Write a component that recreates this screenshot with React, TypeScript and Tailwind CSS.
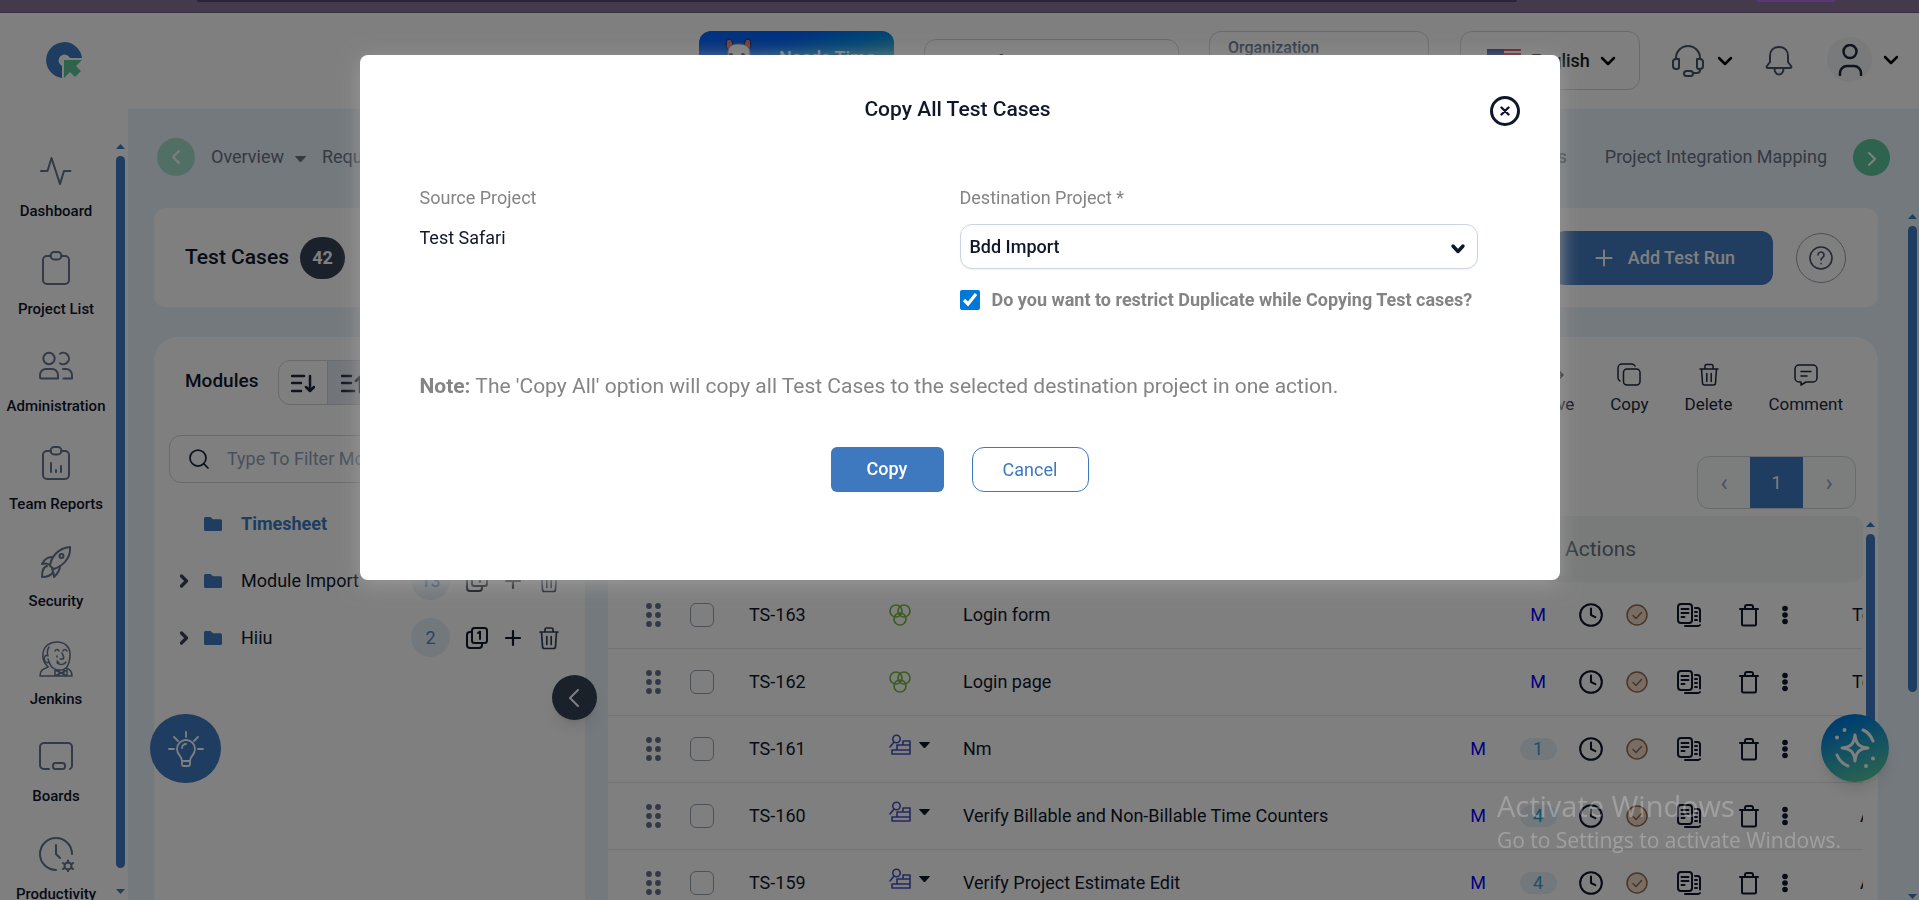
import type { ReactNode } from "react";
import { ChevronDown, ChevronLeft, ChevronRight, Clock, Plus, Search } from "lucide-react";

type IconProps = { className?: string };

function Stroke({ size, width = 2, className, children }: { size: number; width?: number; className?: string; children: ReactNode }) {
  return (
    <svg
      width={size}
      height={size}
      viewBox={`0 0 ${size} ${size}`}
      fill="none"
      stroke="currentColor"
      strokeWidth={width}
      strokeLinecap="round"
      strokeLinejoin="round"
      className={className}
      aria-hidden="true"
    >
      {children}
    </svg>
  );
}

const navItems: { label: string; icon: ReactNode }[] = [
  { label: "Dashboard", icon: <path d="M3 18h6.5L13.500 5l8.500 26 4-13h6.500" /> },
  {
    label: "Project List",
    icon: (
      <>
        <path d="M13 5H9a4 4 0 0 0-4 4v20a4 4 0 0 0 4 4h18a4 4 0 0 0 4-4V9a4 4 0 0 0-4-4h-4" />
        <rect x="12.500" y="1" width="11" height="7.500" rx="3.700" />
      </>
    ),
  },
  {
    label: "Administration",
    icon: (
      <>
        <circle cx="11" cy="10.500" r="5.700" />
        <path d="M22 5.800a5.700 5.700 0 1 1 0 9.400" />
        <path d="M2 29v-2a6 6 0 0 1 6-6h6a6 6 0 0 1 6 6v3.500H3.500A1.500 1.500 0 0 1 2 29zM25 21h3a6 6 0 0 1 6 6v3.500h-8.500" />
      </>
    ),
  },
  {
    label: "Team Reports",
    icon: (
      <>
        <path d="M13 5H9a4 4 0 0 0-4 4v20a4 4 0 0 0 4 4h18a4 4 0 0 0 4-4V9a4 4 0 0 0-4-4h-4" />
        <rect x="12.500" y="1" width="11" height="7.500" rx="3.700" />
        <path d="M13 17v9M18 24v2M23 20v6" />
      </>
    ),
  },
  {
    label: "Security",
    icon: (
      <>
        <path d="M12 23c1-9 8-18 20-19 1 11-7 19-16 22z" />
        <circle cx="23.500" cy="13" r="2" />
        <path d="M14 14c-5 0-8 3-10 7 3-1 5-1 8 1M22 23c0 5-3 8-6 11 0-3 0-5-2-8M9 23c-4 1-5 6-5 11 4 0 9-1 11-5" />
      </>
    ),
  },
  {
    label: "Jenkins",
    icon: (
      <>
        <path d="M10 26C6 22 4 18 5 12 6 5 12 1 19 1c8 0 13 5 13 12 0 6-1 11-4 14-3 3-9 3-13 0-3-2-4-6-5-9" strokeWidth="1.500" />
        <path d="M11 6c-2 3-2 6-1 9-3-2-5 2-3 5 1 2 3 2 4 1M17 10c1-2 3-2 4 0M25 10c1-2 3-2 4 0M19 15v1M24 12c1 3 3 5 1 6h-3M19 22c3 2 7 2 9-1M19 20l2 2" strokeWidth="1.500" />
        <path d="M10 26c-5 2-8 3-8 9h32c0-5-2-7-6-8M17 29v6M17 29l6 3 6-3v6l-6-3-6 3M21 29v5M26 29v5" strokeWidth="1.500" />
      </>
    ),
  },
  {
    label: "Boards",
    icon: (
      <>
        <path d="M11 31H6a4 4 0 0 1-4-4V9a4 4 0 0 1 4-4h24a4 4 0 0 1 4 4v18a4 4 0 0 1-2 4" />
        <rect x="15" y="25" width="12" height="6" rx="2.500" />
      </>
    ),
  },
  {
    label: "Productivity",
    icon: (
      <>
        <path d="M18 34A16 16 0 1 1 34 18M18 9v9l4 4" />
        <circle cx="30" cy="30" r="3.500" />
        <path d="M30 24.500v2M30 33.500v2M25 27l2 1.300M33 31.700l2 1.300M25 33l2-1.300M33 28.300l2-1.300" />
      </>
    ),
  },
];

const modules = [
  { name: "Module Import", count: 13 },
  { name: "Hiiu", count: 2 },
];

type TestCase = { id: string; title: string; bdd?: boolean; runs?: number; owner: string };

const testCases: TestCase[] = [
  { id: "TS-163", title: "Login form", bdd: true, owner: "To" },
  { id: "TS-162", title: "Login page", bdd: true, owner: "To" },
  { id: "TS-161", title: "Nm", runs: 1, owner: "" },
  { id: "TS-160", title: "Verify Billable and Non-Billable Time Counters", runs: 4, owner: "A" },
  { id: "TS-159", title: "Verify Project Estimate Edit", runs: 4, owner: "A" },
];

function Logo() {
  return (
    <svg width="36" height="36" viewBox="0 0 36 36" aria-label="Logo">
      <path fill="#3d7ac0" d="M16 36A18 18 0 1 1 36 16H24a6 6 0 1 0-8 8z" />
      <path fill="#5cc79b" d="M18 18h18l-6 6 5 5-6 6-5-5-6 6z" />
    </svg>
  );
}

function Arrow({ down = false }: { down?: boolean }) {
  return (
    <svg width="9" height="5" viewBox="0 0 9 5" fill="#3d7ac0" className="shrink-0" aria-hidden="true">
      <path d={down ? "M0 0h9L4.500 5z" : "M0 5h9L4.500 0z"} />
    </svg>
  );
}

function Trash({ className }: IconProps) {
  return (
    <Stroke size={24} width={1.7} className={className}>
      <path d="M3 6h18M8 6V3.500A1.500 1.500 0 0 1 9.500 2h5A1.500 1.500 0 0 1 16 3.500V6M4.500 6l1 14.500A2 2 0 0 0 7.500 22.500h9a2 2 0 0 0 2-2l1-14.500M9.800 10.500v8M14.200 10.500v8" />
    </Stroke>
  );
}

function TrashOutline() {
  return (
    <Stroke size={24} width={2}>
      <path d="M3 6h18M8 6V4a2 2 0 0 1 2-2h4a2 2 0 0 1 2 2v2M5 6v15a1.500 1.500 0 0 0 1.500 1.500h11A1.500 1.500 0 0 0 19 21V6" />
    </Stroke>
  );
}

function CopyCount() {
  return (
    <Stroke size={22} width={2}>
      <rect x="6" y="1" width="15" height="15" rx="2.500" />
      <path d="M6 5H4a3 3 0 0 0-3 3v10a3 3 0 0 0 3 3h9a3 3 0 0 0 3-3v-2M12 6l2-1.500V12" />
    </Stroke>
  );
}

function Docs() {
  return (
    <Stroke size={26} width={2}>
      <rect x="2" y="2" width="14" height="19" rx="3" />
      <path d="M5.500 7h7M5.500 11h7M5.500 15h3M19 6h2.500A2.500 2.500 0 0 1 24 8.500v11M9 24h12.500a2.500 2.500 0 0 0 2.500-1M19 10h2M19 14h2M19 18h2" />
    </Stroke>
  );
}

function Folder() {
  return (
    <svg width="18" height="14" viewBox="0 0 18 14" fill="#3d7ac0" className="ml-[10px] shrink-0" aria-hidden="true">
      <path d="M1.500 0h5L9 2.200h7.500A1.500 1.500 0 0 1 18 3.700v8.800a1.500 1.500 0 0 1-1.500 1.500h-15A1.500 1.500 0 0 1 0 12.500v-11A1.500 1.500 0 0 1 1.500 0z" />
    </svg>
  );
}

function Caret({ className }: IconProps) {
  return (
    <svg width="11" height="7" viewBox="0 0 11 7" fill="currentColor" stroke="currentColor" strokeLinejoin="round" className={className} aria-hidden="true">
      <path d="M.500.500h10L5.500 6z" />
    </svg>
  );
}

function Header() {
  return (
    <header className="flex h-24 shrink-0 items-start bg-white pr-4">
      <div className="flex h-24 w-32 shrink-0 items-center justify-center pb-[2px]">
        <Logo />
      </div>
      <div className="ml-auto flex items-start pt-[18px]">
        <button className="flex h-[59px] w-[195px] items-center rounded-xl bg-linear-to-br from-[#0064ff] from-30% to-[#62d09c] pb-[6px] pl-6 text-lg font-medium text-white">
          <svg width="34" height="46" viewBox="0 0 34 46" className="mt-[6px]" aria-hidden="true">
            <path fill="#d98383" stroke="#2b2050" d="M5 12C2 8 3 1 6 1s4 5 4 9zM21 10c0-4 1-9 4-9s4 7 1 11z" />
            <path fill="#fff" stroke="#8892a8" d="M5 46V15C5 8 9 6 15.500 6S27 8 27 15v31z" />
            <circle cx="8" cy="17" r="2" fill="#334" />
            <circle cx="20" cy="17" r="2" fill="#334" />
          </svg>
          <span className="ml-[22px]">Needs Time</span>
        </button>
        <select aria-label="Project" className="mt-2 ml-[30px] h-[45px] w-[255px] appearance-none rounded-xl border border-gray-300 bg-white px-3 text-lg text-slate-900">
          <option>Test Safari</option>
        </select>
        <div className="ml-[30px] h-[59px] w-[220px] rounded-xl border border-gray-300 px-[18px] pt-1 text-base font-medium text-slate-500">
          Organization
        </div>
        <div className="relative ml-[31px]">
          <select aria-label="Language" className="h-[59px] w-[180px] appearance-none rounded-xl border border-gray-300 bg-white pl-[70px] text-lg font-medium text-gray-900">
            <option>English</option>
          </select>
          <svg width="34" height="23" viewBox="0 0 34 23" className="absolute top-[18px] left-[27px]" aria-hidden="true">
            <path fill="#fff" d="M0 0h34v23H0z" />
            <path stroke="#d8344c" strokeWidth="2" d="M0 1h34M0 5h34M0 9h34M0 13h34M0 17h34M0 21h34" />
            <path fill="#3b4f9c" d="M0 0h17v12H0z" />
          </svg>
          <ChevronDown className="absolute top-[18px] right-5 size-6" strokeWidth={2.5} />
        </div>
        <button aria-label="Support" className="mt-[14px] ml-8 flex items-center gap-[9px] text-slate-600">
          <Stroke size={32}>
            <path d="M4 14v-1a12 12 0 0 1 24 0v1M7 14H4a3 3 0 0 0-3 3v4a3 3 0 0 0 3 3h1a2 2 0 0 0 2-2zM25 14h3a3 3 0 0 1 3 3v4a3 3 0 0 1-3 3h-1a2 2 0 0 1-2-2zM28 24v1a3 3 0 0 1-3 3h-4" />
            <rect x="12" y="26" width="9" height="5" rx="2.500" />
          </Stroke>
          <ChevronDown className="size-6 text-black" strokeWidth={2.5} />
        </button>
        <button aria-label="Notifications" className="mt-[14px] ml-[26px] text-slate-600">
          <Stroke size={32}>
            <path d="M16 2c-6 0-9 4-9 9v6l-3 4c-1 1 0 2 1 2h22c1 0 2-1 1-2l-3-4v-6c0-5-3-9-9-9zM11.500 24c0 3 2 5.500 4.500 5.500s4.500-2.500 4.500-5.500" />
          </Stroke>
        </button>
        <button aria-label="Account" className="mt-[6px] ml-8 flex items-center gap-[7px]">
          <span className="flex size-[45px] items-center justify-center rounded-full bg-gray-100 text-slate-800">
            <Stroke size={32} width={2.5}>
              <circle cx="16" cy="7.500" r="6.500" />
              <path d="M6 31v-2a7 7 0 0 1 7-7h7a7 7 0 0 1 7 7v2" />
            </Stroke>
          </span>
          <ChevronDown className="size-6" strokeWidth={2.5} />
        </button>
      </div>
    </header>
  );
}

function Sidebar() {
  return (
    <aside className="flex w-32 shrink-0 bg-white">
      <nav className="w-28 pt-11">
        <ul className="grid h-[780px] auto-rows-fr">
          {navItems.map((item) => (
            <li key={item.label}>
              <a href="#" className="flex flex-col items-center gap-[11px] text-slate-500">
                <Stroke size={36}>{item.icon}</Stroke>
                <span className="text-[15px] leading-[22px] font-medium whitespace-nowrap text-slate-900">{item.label}</span>
              </a>
            </li>
          ))}
        </ul>
      </nav>
      <div className="ml-1 flex flex-col items-center pt-[35px] pb-[6px]">
        <Arrow />
        <div className="mt-[7px] mb-[21px] w-[9px] flex-1 rounded-full bg-[#3d7ac0]" />
        <Arrow down />
      </div>
    </aside>
  );
}

function ModulePanel() {
  return (
    <section className="w-[431px] shrink-0 rounded-t-3xl bg-white pt-[23px]">
      <div className="flex items-center pl-[31px]">
        <h2 className="pb-1 text-[19px] leading-6 font-medium text-slate-900">Modules</h2>
        <div className="ml-5 flex h-[45px] overflow-hidden rounded-xl border border-gray-300 text-slate-800">
          <button aria-label="Expand all" className="flex w-[49px] items-center justify-center border-r border-gray-300 pt-[2px]">
            <Stroke size={24} width={2.5}>
              <path d="M1 4h12M1 11h9M1 19h9M19 4v15M15 15l4 4 4-4" />
            </Stroke>
          </button>
          <button aria-label="Collapse all" className="flex w-[49px] items-center justify-center bg-slate-200 pt-[2px]">
            <Stroke size={24} width={2.5}>
              <path d="M1 4h9M1 11h9M1 19h12M19 20V5M15 9l4-4 4 4" />
            </Stroke>
          </button>
        </div>
      </div>
      <div className="mx-[15px] mt-[30px] flex h-12 items-center rounded-xl border border-gray-300 pl-[17px]">
        <Search className="size-6 text-slate-800" strokeWidth={1.75} />
        <input aria-label="Filter modules" placeholder="Type To Filter Modules" className="ml-4 w-72 text-lg outline-none placeholder:text-slate-400" />
      </div>
      <ul className="mt-3 text-lg text-slate-900">
        <li className="flex h-[57px] items-center pl-10 font-bold text-[#3d7ac0]">
          <Folder />
          <span className="ml-[19px]">Timesheet</span>
        </li>
        {modules.map((m) => (
          <li key={m.name} className="flex h-[57px] items-center pr-6 pl-5">
            <ChevronRight className="size-5 text-gray-700" strokeWidth={4} />
            <Folder />
            <span className="ml-[19px]">{m.name}</span>
            <span className="ml-auto flex size-[39px] items-center justify-center rounded-full bg-[#e6f0f8] text-[#4e86cf]">{m.count}</span>
            <button aria-label="Copy module" className="ml-4">
              <CopyCount />
            </button>
            <button aria-label="Add module" className="ml-[13px]">
              <Plus className="size-6" strokeWidth={2.2} />
            </button>
            <button aria-label="Delete module" className="ml-3 text-slate-700">
              <Trash />
            </button>
          </li>
        ))}
      </ul>
    </section>
  );
}

function ToolButton({ label, children }: { label: string; children: ReactNode }) {
  return (
    <button className="flex flex-col items-center gap-[5px] text-[17px] leading-6 text-slate-800">
      <Stroke size={24} width={1.5}>{children}</Stroke>
      {label}
    </button>
  );
}

function CaseRow({ item }: { item: TestCase }) {
  return (
    <tr className="h-[67px] [&>td]:border-b [&>td]:border-gray-200">
      <td className="pl-[38px]">
        <svg width="15" height="24" viewBox="0 0 15 24" fill="#64708a" aria-hidden="true">
          {[3, 12, 21].map((y) => (
            <g key={y}>
              <circle cx="3" cy={y} r="2.900" />
              <circle cx="12" cy={y} r="2.900" />
            </g>
          ))}
        </svg>
      </td>
      <td>
        <input type="checkbox" aria-label={item.id} className="block size-6 appearance-none rounded-md border border-gray-400" />
      </td>
      <td>{item.id}</td>
      <td>
        {item.bdd ? (
          <Stroke size={22} width={1.7} className="text-[#78b83c]">
            <circle cx="7" cy="7" r="6" />
            <circle cx="15" cy="7" r="6" />
            <circle cx="11" cy="15" r="6" />
          </Stroke>
        ) : (
          <button aria-label="Test type" className="flex items-center gap-2 pb-2">
            <Stroke size={22} width={1.6} className="text-[#4650c0]">
              <circle cx="7.500" cy="5" r="3.700" />
              <path d="M5 8l-4 5M8 11h13v5H8zM14 11V7h7v4M3 16h18v4H3z" />
            </Stroke>
            <Caret />
          </button>
        )}
      </td>
      <td>{item.title}</td>
      <td>
        <div className="flex items-center">
          <span className="w-15 text-center text-[#0a00ff]">{item.runs ? "M" : ""}</span>
          <span className="flex w-15 justify-center text-[#0a00ff]">
            {item.runs ? <span className="w-[37px] rounded-full bg-[#e4f0f8] text-center leading-[22px] text-[#3a9fd0]">{item.runs}</span> : "M"}
          </span>
          <button aria-label="History" className="flex w-[46px] justify-center">
            <Clock className="size-[26px]" strokeWidth={1.9} />
          </button>
          <button aria-label="Approve" className="flex w-[45px] justify-center text-[#98694c]">
            <Stroke size={22} width={1.5}>
              <circle cx="11" cy="11" r="10" fill="#efdacb" />
              <path d="M7 11.500l3 3 5.500-6" />
            </Stroke>
          </button>
          <button aria-label="Duplicate" className="flex w-15 justify-center">
            <Docs />
          </button>
          <button aria-label="Delete" className="flex w-15 justify-center">
            <TrashOutline />
          </button>
          <button aria-label="More">
            <svg width="12" height="20" viewBox="0 0 12 20" fill="currentColor" aria-hidden="true">
              <circle cx="6" cy="3.500" r="2.800" />
              <circle cx="6" cy="10" r="2.800" />
              <circle cx="6" cy="16.500" r="2.800" />
            </svg>
          </button>
        </div>
      </td>
      <td className={item.owner === "A" ? "overflow-hidden pl-2" : "overflow-hidden"}>{item.owner}</td>
    </tr>
  );
}

function CasesPanel() {
  return (
    <section className="min-w-0 flex-1 rounded-t-3xl bg-white">
      <div className="flex justify-end gap-9 pt-[26px] pr-[35px]">
        <ToolButton label="Move">
          <path d="M2 12h19M16 7l5 5-5 5" />
        </ToolButton>
        <ToolButton label="Copy">
          <rect x="6.500" y="6" width="16.500" height="16" rx="3.500" />
          <path d="M3 18a4 4 0 0 1-2-3V5a4 4 0 0 1 4-4h10a4 4 0 0 1 3 2" />
        </ToolButton>
        <ToolButton label="Delete">
          <path d="M3 6h18M8 6V3a1.500 1.500 0 0 1 1.500-1.500h5A1.500 1.500 0 0 1 16 3v3M4.500 6l1 14a2 2 0 0 0 2 2h9a2 2 0 0 0 2-2l1-14M9.800 10.500v8M14.200 10.500v8" />
        </ToolButton>
        <ToolButton label="Comment">
          <path d="M5 2h14a4 4 0 0 1 4 4v9a4 4 0 0 1-4 4h-7l-5 3v-3H5a4 4 0 0 1-4-4V6a4 4 0 0 1 4-4zM7 8.500h10M7 13h6" />
        </ToolButton>
      </div>
      <div className="mt-10 flex justify-end pr-[22px]">
        <div className="flex h-[53px] overflow-hidden rounded-xl border border-gray-300 bg-gray-50 text-lg text-slate-400">
          <button aria-label="Previous page" className="w-[52px] text-2xl">‹</button>
          <button className="w-[53px] bg-[#3d7ac0] text-white">1</button>
          <button aria-label="Next page" className="w-[52px] text-2xl">›</button>
        </div>
      </div>
      <div className="mt-[7px] flex">
        <table className="w-full min-w-0 table-fixed border-separate border-spacing-0 text-left text-lg text-slate-900">
          <colgroup>
            <col className="w-[82px]" />
            <col className="w-[59px]" />
            <col className="w-[140px]" />
            <col className="w-[74px]" />
            <col />
            <col className="w-[404px]" />
            <col className="w-[11px]" />
          </colgroup>
          <thead>
            <tr className="h-[66px] text-[21px] text-gray-500">
              <th colSpan={5} className="rounded-l-3xl bg-[#f1f7f4]" />
              <th className="bg-[#f1f7f4] pl-[117px] font-normal">Actions</th>
              <th className="rounded-r-xl bg-[#f1f7f4]" />
            </tr>
          </thead>
          <tbody>
            {testCases.map((item) => (
              <CaseRow key={item.id} item={item} />
            ))}
          </tbody>
        </table>
        <div className="mx-[3px] flex shrink-0 flex-col pt-[6px]">
          <Arrow />
          <div className="mt-[7px] h-[218px] w-[9px] rounded-full bg-[#3d7ac0]" />
        </div>
      </div>
    </section>
  );
}

function CopyDialog() {
  return (
    <div className="fixed inset-0 flex items-start justify-center bg-black/50 pt-[55px]">
      <div role="dialog" aria-labelledby="copy-title" className="relative w-[1200px] rounded-lg bg-white pt-[39px] pb-[88px] shadow-[0_4px_20px_#999]">
        <h1 id="copy-title" className="pr-1 text-center text-[21px] leading-[30px] font-medium text-slate-900">
          Copy All Test Cases
        </h1>
        <button aria-label="Close" className="absolute top-[41px] right-10 flex size-[30px] items-center justify-center rounded-full border-[3px] border-slate-900 text-slate-900">
          <Stroke size={10} width={2.4}>
            <path d="M1.500 1.500l7 7M8.500 1.500l-7 7" />
          </Stroke>
        </button>
        <div className="mt-[62px] grid grid-cols-2 px-[60px] text-lg leading-6 text-[#848484]">
          <div>
            <p>Source Project</p>
            <p className="mt-4 text-slate-900">Test Safari</p>
          </div>
          <div className="pr-[22px]">
            <label htmlFor="destination">Destination Project *</label>
            <div className="relative mt-[14px]">
              <select id="destination" className="block h-[45px] w-full appearance-none rounded-xl border border-slate-300 bg-white px-[9px] font-medium text-slate-900 shadow-xs">
                <option>Bdd Import</option>
              </select>
              <Stroke size={16} width={3.4} className="pointer-events-none absolute top-4 right-3 text-slate-900">
                <path d="M3 6l5 5.500L13 6" />
              </Stroke>
            </div>
            <label className="mt-[19px] flex items-center gap-3 font-bold whitespace-nowrap">
              <input type="checkbox" defaultChecked className="size-5 accent-[#0078d7]" />
              Do you want to restrict Duplicate while Copying Test cases?
            </label>
          </div>
        </div>
        <p className="mt-[59px] px-[60px] text-[21px] leading-[30px] text-[#848484]">
          <b>Note:</b> The 'Copy All' option will copy all Test Cases to the selected destination project in one action.
        </p>
        <div className="mt-[46px] flex justify-center gap-7 text-lg">
          <button className="h-[45px] w-[113px] rounded-md bg-[#3e79c0] pb-px font-medium text-white">Copy</button>
          <button className="h-[45px] w-[117px] rounded-xl border border-[#3e79c0] text-[#3e79c0]">Cancel</button>
        </div>
      </div>
    </div>
  );
}

export default function App() {
  return (
    <div className="relative flex h-screen flex-col overflow-hidden bg-white font-[Roboto,sans-serif] text-base">
      <div className="flex h-[13px] shrink-0 items-start border-b border-[#745f7e] bg-[#887496]">
        <div className="ml-[197px] h-[2px] w-[1320px] rounded-b-full bg-[#564670]" />
        <div className="ml-[239px] h-[2px] w-20 rounded-b-full bg-[#b070f0]" />
      </div>
      <Header />
      <div className="flex min-h-0 flex-1">
        <Sidebar />
        <main className="flex min-w-0 flex-1 flex-col bg-[#e8f2fa]">
          <nav className="flex h-[99px] shrink-0 items-center px-[29px] pb-[3px] text-lg text-gray-500">
            <button aria-label="Scroll tabs left" className="mr-4 flex size-[38px] items-center justify-center rounded-full bg-[#a5dfcb] text-white">
              <ChevronLeft className="size-6" />
            </button>
            <a href="#">Overview</a>
            <Caret className="mt-1 ml-[11px]" />
            <a href="#" className="ml-4">Requirements</a>
            <a href="#" className="ml-auto">Custom Fields</a>
            <a href="#" className="ml-[38px]">Project Integration Mapping</a>
            <button aria-label="Scroll tabs right" className="ml-[26px] flex size-[37px] items-center justify-center rounded-full bg-[#5cc89e] pt-1 text-white">
              <ChevronRight className="size-6" />
            </button>
          </nav>
          <div className="flex min-h-0 flex-1 pr-[2px] pl-[26px]">
            <div className="flex min-w-0 flex-1 flex-col gap-[30px]">
              <section className="flex h-[99px] shrink-0 items-center rounded-xl bg-white pr-8 pl-[31px]">
                <h1 className="text-[21px] font-medium text-slate-900">Test Cases</h1>
                <span className="ml-[11px] flex h-[42px] w-[45px] items-center justify-center rounded-full bg-[#344256] text-lg font-bold text-white">42</span>
                <button className="ml-auto flex h-[54px] items-center gap-[11px] rounded-xl bg-[#437ac0] px-[38px] text-lg font-medium text-white">
                  <Plus className="size-[26px]" strokeWidth={1.75} />
                  Add Test Run
                </button>
                <button aria-label="Help" className="ml-[23px] flex size-[50px] items-center justify-center rounded-full border border-gray-400 text-slate-600">
                  <Stroke size={24} width={1.6}>
                    <circle cx="12" cy="12" r="11" />
                    <path d="M9 9a3 3 0 1 1 4.500 2.600c-1 .600-1.500 1.200-1.500 2.400M12 17.500v.300" />
                  </Stroke>
                </button>
              </section>
              <div className="flex min-h-0 flex-1 gap-[23px]">
                <ModulePanel />
                <CasesPanel />
              </div>
            </div>
            <div className="ml-[30px] flex shrink-0 flex-col items-center justify-between pt-[6px] pb-px">
              <div>
                <Arrow />
                <div className="mt-[7px] h-[466px] w-[9px] rounded-full bg-[#3d7ac0]" />
              </div>
              <Arrow down />
            </div>
          </div>
        </main>
      </div>

      <button aria-label="Collapse modules" className="absolute top-[675px] left-[552px] flex size-[45px] items-center justify-center rounded-full bg-[#344256] text-white shadow-lg">
        <Stroke size={18}>
          <path d="M12 1L4 9l8 8" />
        </Stroke>
      </button>
      <button aria-label="Tips" className="absolute top-[714px] left-[150px] flex h-[69px] w-[71px] items-center justify-center rounded-full bg-[#3d7ac0] text-white">
        <Stroke size={36} width={1.8}>
          <path d="M14 30c0-5-5-6-5-12a9 9 0 0 1 18 0c0 6-5 7-5 12zM14 30v3.500a1.500 1.500 0 0 0 1.500 1.500h5a1.500 1.500 0 0 0 1.500-1.500V30M14 17a4 4 0 0 1 4-4M18 1v5M6 6l4 4M30 6l-4 4M1 18h5M30 18h5" />
        </Stroke>
      </button>
      <button aria-label="Assistant" className="absolute right-[30px] bottom-[118px] flex size-[68px] items-center justify-center rounded-full bg-linear-160 from-[#0068e8] to-[#5fd090] text-white shadow-lg">
        <Stroke size={44} width={3}>
          <path d="M22 9c1 9 4 12 13 13-9 1-12 4-13 13-1-9-4-12-13-13 9-1 12-4 13-13zM30 4c5 2 8 6 10 11M4 29c2 5 6 9 11 11" />
          <path d="M11.500 4v0M4 11.500v0M40 32.500v0M33 40v0" strokeWidth="4" />
        </Stroke>
      </button>

      <CopyDialog />

      <div className="pointer-events-none absolute right-[78px] bottom-11 font-['Open_Sans',sans-serif] whitespace-nowrap text-white/25">
        <p className="text-[29px] leading-9">Activate Windows</p>
        <p className="text-[21px] leading-8">Go to Settings to activate Windows.</p>
      </div>
    </div>
  );
}
